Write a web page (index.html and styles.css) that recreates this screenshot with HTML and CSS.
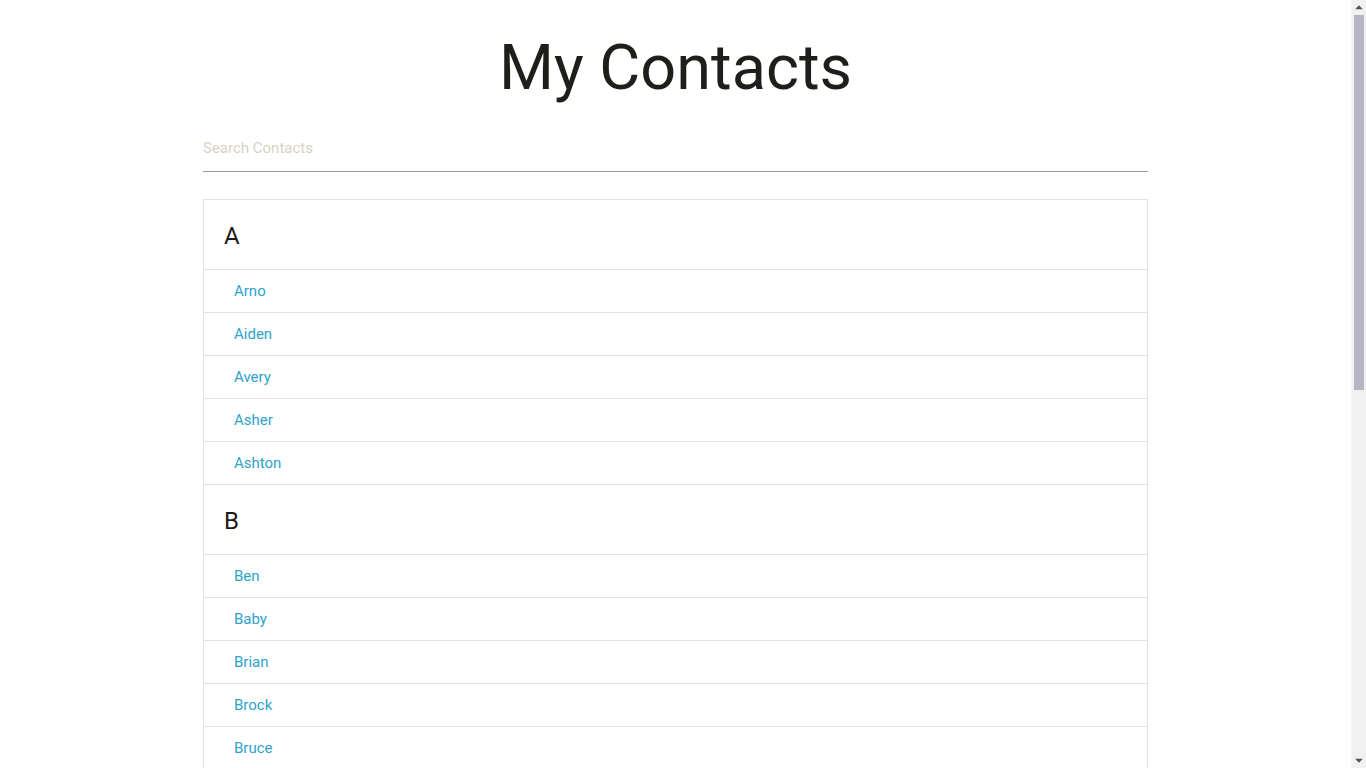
FILE: index.html
```html
<!DOCTYPE html>
<html lang="en">
<head>
<meta charset="utf-8">
<title>My Contacts</title>
<link rel="stylesheet" href="styles.css">
</head>
<body>
<main class="container">
  <h1 class="title">My Contacts</h1>
  <input class="search" type="text" placeholder="Search Contacts">
  <ul class="list">
    <li class="group-header">A</li>
    <li class="item"><a href="#">Arno</a></li>
    <li class="item"><a href="#">Aiden</a></li>
    <li class="item"><a href="#">Avery</a></li>
    <li class="item"><a href="#">Asher</a></li>
    <li class="item"><a href="#">Ashton</a></li>
    <li class="group-header">B</li>
    <li class="item"><a href="#">Ben</a></li>
    <li class="item"><a href="#">Baby</a></li>
    <li class="item"><a href="#">Brian</a></li>
    <li class="item"><a href="#">Brock</a></li>
    <li class="item"><a href="#">Bruce</a></li>
    <li class="group-header">C</li>
    <li class="item"><a href="#">Carl</a></li>
    <li class="item"><a href="#">Caleb</a></li>
    <li class="item"><a href="#">Carter</a></li>
    <li class="item"><a href="#">Chase</a></li>
    <li class="item"><a href="#">Cole</a></li>
    <li class="group-header">D</li>
    <li class="item"><a href="#">Dan</a></li>
    <li class="item"><a href="#">Dylan</a></li>
    <li class="item"><a href="#">David</a></li>
  </ul>
</main>
<div class="scrollbar" aria-hidden="true">
  <div class="sb-btn">
    <svg width="15" height="15" viewBox="0 0 15 15"><path d="M3.5 9.5 L7.5 5 L11.5 9.5 Z" fill="#505050"/></svg>
  </div>
  <div class="sb-track">
    <div class="sb-thumb"></div>
  </div>
  <div class="sb-btn">
    <svg width="15" height="15" viewBox="0 0 15 15"><path d="M3.5 5.5 L7.5 10 L11.5 5.5 Z" fill="#505050"/></svg>
  </div>
</div>
</body>
</html>
```

FILE: styles.css
```css
html, body {
  margin: 0;
  padding: 0;
  background: #fff;
}
body {
  font-family: Roboto, "Liberation Sans", sans-serif;
  color: #222;
  padding-right: 15px;
}
.container {
  width: 945px;
  margin: 0 auto;
  padding-bottom: 40px;
  display: flex;
  flex-direction: column;
}
.title {
  margin: 29px 0 0;
  font-size: 63px;
  line-height: 77px;
  font-weight: 400;
  text-align: center;
  color: #1e1e1a;
}
.search {
  margin-top: 24px;
  box-sizing: content-box;
  padding: 0 0 6px 0;
  height: 35px;
  border: none;
  border-bottom: 1px solid #9a9a9a;
  background: transparent;
  font-family: inherit;
  font-size: 15px;
  outline: none;
  color: #333;
}
.search::placeholder {
  color: #d6d3c2;
}
.list {
  list-style: none;
  margin: 27px 0 0;
  padding: 0;
  border: 1px solid #e2e2ea;
  border-bottom: none;
}
.group-header {
  height: 66px;
  padding-top: 3px;
  border-bottom: 1px solid #e2e2ea;
  padding-left: 20px;
  display: flex;
  align-items: center;
  font-size: 24px;
  color: #1c1c18;
}
.item {
  height: 42px;
  border-bottom: 1px solid #e2e2ea;
  padding-left: 30px;
  display: flex;
  align-items: center;
  font-size: 15px;
}
.item a {
  color: #2fa3cc;
  text-decoration: none;
}

/* simulated classic scrollbar */
.scrollbar {
  position: fixed;
  top: 0;
  right: 0;
  width: 15px;
  height: 100vh;
  background: #f1f1f1;
  border-left: 1px solid #f6f6f6;
  box-sizing: border-box;
  display: flex;
  flex-direction: column;
}
.sb-btn {
  height: 15px;
  flex: none;
  display: flex;
}
.sb-track {
  flex: 1;
  padding: 0 2px;
}
.sb-thumb {
  height: 375px;
  background: #b6b6c2;
}
```
